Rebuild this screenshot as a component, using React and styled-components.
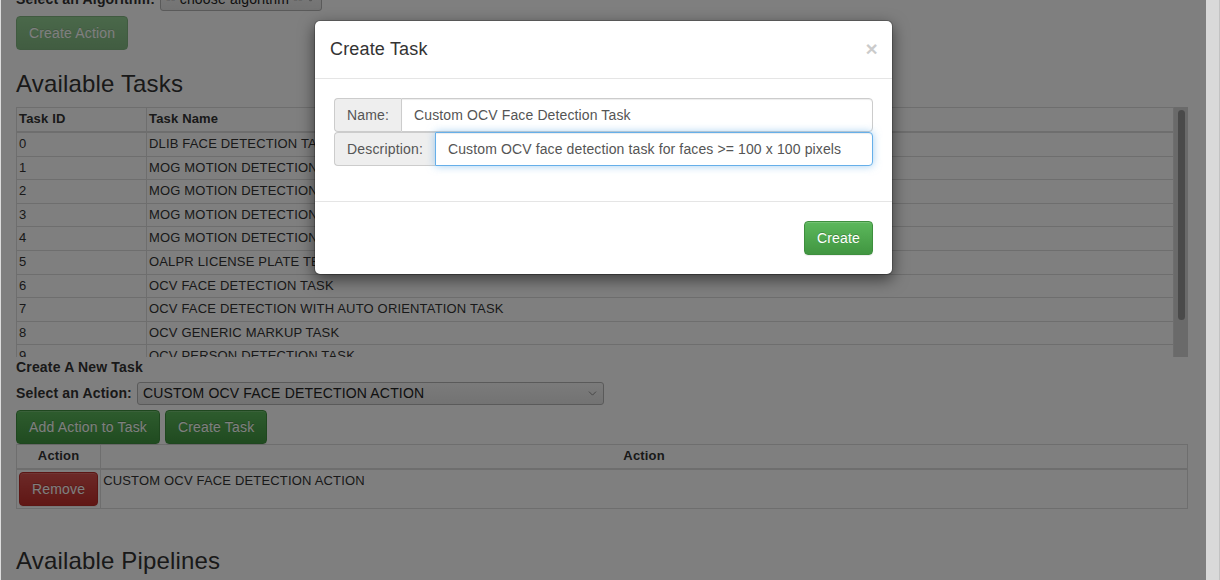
import React from 'react';
import styled, { createGlobalStyle, css } from 'styled-components';
import { ChevronDown } from 'lucide-react';

const GlobalStyle = createGlobalStyle`
  html, body {
    margin: 0;
    padding: 0;
    overflow: hidden;
  }
  body {
    font-family: "Liberation Sans", Arial, sans-serif;
    font-size: 14px;
    line-height: 1.42857;
    letter-spacing: 0.17px;
    color: #333;
    background: #fff;
  }
  * { box-sizing: border-box; }
`;

const Screen = styled.div`
  display: flex;
  width: 1220px;
  height: 580px;
`;

const Viewport = styled.div`
  position: relative;
  flex: 1;
  height: 580px;
  overflow: hidden;
  background: #fff;
  border-left: 1px solid #ddd;
`;

const PageScrollbar = styled.div`
  width: 14px;
  height: 580px;
  background: #d9d9d9;
  border-right: 1px solid #c2c2c2;
`;

const Page = styled.div`
  margin-top: -12px;
  padding: 0 18px 0 15px;
`;

const FieldRow = styled.div`
  display: flex;
  align-items: center;
  gap: 5px;
  margin-top: ${p => p.$top || 0}px;
`;

const Label = styled.span`
  font-weight: bold;
  font-size: 14px;
`;

const SelectBox = styled.div`
  display: flex;
  align-items: center;
  justify-content: space-between;
  width: ${p => p.$w}px;
  height: 23px;
  padding: 0 4px 0 5px;
  border: 1px solid #b4b4b4;
  border-radius: 3px;
  background: linear-gradient(#f6f6f6, #e6e6e6);
  font-size: 14px;
  color: #222;
  svg { color: #777; }
`;

const btnVariants = {
  success: css`
    background: linear-gradient(#5cb85c, #419641);
    border-color: #3e8f3e;
  `,
  danger: css`
    background: linear-gradient(#d9534f, #c12e2a);
    border-color: #b92c28;
  `,
};

const Button = styled.button`
  display: inline-block;
  padding: 6px 12px;
  font-family: inherit;
  font-size: 14px;
  line-height: 20px;
  letter-spacing: 0.17px;
  color: #fff;
  border: 1px solid transparent;
  border-radius: 4px;
  text-shadow: 0 -1px 0 rgba(0, 0, 0, 0.2);
  box-shadow: inset 0 1px 0 rgba(255, 255, 255, 0.15), 0 1px 1px rgba(0, 0, 0, 0.075);
  white-space: nowrap;
  cursor: pointer;
  ${p => btnVariants[p.$variant]}
  &:disabled {
    opacity: 0.65;
    box-shadow: none;
  }
`;

const TopButton = styled(Button)`
  margin-top: 5px;
  display: block;
`;

const Heading = styled.h3`
  margin: 21px 0 10px;
  font-size: 24px;
  font-weight: normal;
  line-height: 1.1;
  color: #333;
`;

const SubHeading = styled.div`
  font-weight: bold;
  font-size: 14px;
  line-height: 20px;
`;

const ScrollFrame = styled.div`
  display: flex;
  height: 250px;
`;

const TableClip = styled.div`
  flex: 1;
  overflow: hidden;
`;

const ScrollTrack = styled.div`
  width: 14px;
  padding: 3px 3px 0 4px;
  background: #d5d5d5;
`;

const ScrollThumb = styled.div`
  height: 210px;
  border-radius: 4px;
  background: #959595;
`;

const Table = styled.table`
  width: 100%;
  border-collapse: collapse;
  font-size: 13px;
  line-height: 18.6px;
  color: #333;
  margin-bottom: ${p => p.$bottom || 0}px;
  th, td {
    border: 1px solid #ddd;
    padding: 2px;
    text-align: left;
    vertical-align: top;
  }
  th {
    font-weight: bold;
    border-bottom-width: 2px;
  }
`;

const IdCol = styled.th`
  width: 130px;
`;

const CenterTh = styled.th`
  && { text-align: center; }
  width: ${p => p.$narrow ? '1%' : 'auto'};
`;

const ButtonRow = styled.div`
  display: flex;
  gap: 5px;
  margin-top: 5px;
`;

const Backdrop = styled.div`
  position: absolute;
  inset: 0;
  background: rgba(0, 0, 0, 0.5);
`;

const Dialog = styled.div`
  width: 579px;
  margin: 20px auto 0;
  background: #fff;
  border: 1px solid rgba(0, 0, 0, 0.2);
  border-radius: 6px;
  box-shadow: 0 5px 15px rgba(0, 0, 0, 0.5);
  background-clip: padding-box;
`;

const DialogHeader = styled.div`
  display: flex;
  justify-content: space-between;
  align-items: center;
  padding: 16px 14px 15px 15px;
  border-bottom: 1px solid #e5e5e5;
`;

const DialogTitle = styled.h4`
  margin: 0;
  font-size: 18px;
  font-weight: normal;
  line-height: 1.42857;
  color: #333;
`;

const Close = styled.span`
  font-size: 21px;
  font-weight: bold;
  line-height: 1;
  color: #000;
  opacity: 0.2;
  margin-top: -2px;
`;

const DialogBody = styled.div`
  padding: 19px 19px 35px;
`;

const InputGroup = styled.div`
  display: flex;
  height: 34px;
`;

const Addon = styled.span`
  padding: 6px 12px;
  font-size: 14px;
  line-height: 20px;
  color: #555;
  background: #eee;
  border: 1px solid #ccc;
  border-right: 0;
  border-radius: 4px 0 0 4px;
  white-space: nowrap;
`;

const Input = styled.input`
  flex: 1;
  min-width: 0;
  padding: 6px 12px;
  font-family: inherit;
  font-size: 14px;
  line-height: 20px;
  letter-spacing: 0.12px;
  color: #555;
  background: #fff;
  border: 1px solid ${p => p.$focused ? '#66afe9' : '#ccc'};
  border-radius: 0 4px 4px 0;
  outline: none;
  box-shadow: inset 0 1px 1px rgba(0, 0, 0, 0.075)
    ${p => p.$focused ? ', 0 0 8px rgba(102, 175, 233, 0.6)' : ''};
`;

const DialogFooter = styled.div`
  display: flex;
  justify-content: flex-end;
  padding: 19px;
  border-top: 1px solid #e5e5e5;
`;

const tasks = [
  'DLIB FACE DETECTION TASK',
  'MOG MOTION DETECTION TASK',
  'MOG MOTION DETECTION (WITH TRACKING) TASK',
  'MOG MOTION DETECTION PREPROCESSOR TASK',
  'MOG MOTION DETECTION (WITH TRACKING) PREPROCESSOR TASK',
  'OALPR LICENSE PLATE TEXT DETECTION TASK',
  'OCV FACE DETECTION TASK',
  'OCV FACE DETECTION WITH AUTO ORIENTATION TASK',
  'OCV GENERIC MARKUP TASK',
  'OCV PERSON DETECTION TASK',
  'SPHINX SPEECH DETECTION TASK',
];

export default function App() {
  return (
    <>
      <GlobalStyle />
      <Screen>
        <Viewport>
          <Page>
            <FieldRow>
              <Label>Select an Algorithm:</Label>
              <SelectBox $w={162}>
                -- choose algorithm --
                <ChevronDown size={13} strokeWidth={1.5} />
              </SelectBox>
            </FieldRow>
            <TopButton $variant="success" disabled>Create Action</TopButton>

            <Heading>Available Tasks</Heading>
            <ScrollFrame>
              <TableClip>
                <Table>
                  <thead>
                    <tr>
                      <IdCol>Task ID</IdCol>
                      <th>Task Name</th>
                    </tr>
                  </thead>
                  <tbody>
                    {tasks.map((name, i) => (
                      <tr key={i}>
                        <td>{i}</td>
                        <td>{name}</td>
                      </tr>
                    ))}
                  </tbody>
                </Table>
              </TableClip>
              <ScrollTrack>
                <ScrollThumb />
              </ScrollTrack>
            </ScrollFrame>

            <SubHeading>Create A New Task</SubHeading>
            <FieldRow $top={5}>
              <Label>Select an Action:</Label>
              <SelectBox $w={467}>
                CUSTOM OCV FACE DETECTION ACTION
                <ChevronDown size={13} strokeWidth={1.5} />
              </SelectBox>
            </FieldRow>
            <ButtonRow>
              <Button $variant="success">Add Action to Task</Button>
              <Button $variant="success">Create Task</Button>
            </ButtonRow>
            <Table $bottom={39}>
              <thead>
                <tr>
                  <CenterTh $narrow>Action</CenterTh>
                  <CenterTh>Action</CenterTh>
                </tr>
              </thead>
              <tbody>
                <tr>
                  <td><Button $variant="danger">Remove</Button></td>
                  <td>CUSTOM OCV FACE DETECTION ACTION</td>
                </tr>
              </tbody>
            </Table>

            <Heading>Available Pipelines</Heading>
          </Page>

          <Backdrop>
            <Dialog>
              <DialogHeader>
                <DialogTitle>Create Task</DialogTitle>
                <Close>&times;</Close>
              </DialogHeader>
              <DialogBody>
                <InputGroup>
                  <Addon>Name:</Addon>
                  <Input readOnly value="Custom OCV Face Detection Task" />
                </InputGroup>
                <InputGroup>
                  <Addon>Description:</Addon>
                  <Input $focused readOnly value="Custom OCV face detection task for faces >= 100 x 100 pixels" />
                </InputGroup>
              </DialogBody>
              <DialogFooter>
                <Button $variant="success">Create</Button>
              </DialogFooter>
            </Dialog>
          </Backdrop>
        </Viewport>
        <PageScrollbar />
      </Screen>
    </>
  );
}
